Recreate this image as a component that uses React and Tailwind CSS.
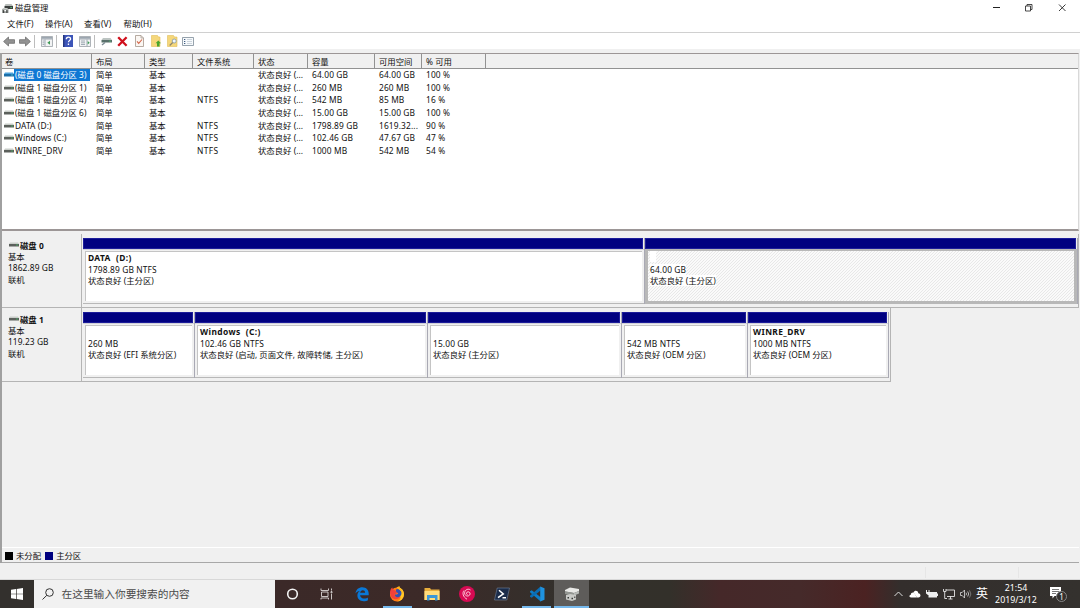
import clsx from 'clsx'

const COLUMNS = [
  { label: '卷', cell: 'w-[90px] pl-[3px]' },
  { label: '布局', cell: 'w-[53px] pl-1' },
  { label: '类型', cell: 'w-[48px] pl-1' },
  { label: '文件系统', cell: 'w-[61px] pl-1' },
  { label: '状态', cell: 'w-[54px] pl-1' },
  { label: '容量', cell: 'w-[67px] pl-1' },
  { label: '可用空间', cell: 'w-[47px] pl-1' },
  { label: '% 可用', cell: 'w-[64px] pl-1' },
]

const VOLUMES = [
  ['(磁盘 0 磁盘分区 3)', '', '64.00 GB', '64.00 GB', '100 %'],
  ['(磁盘 1 磁盘分区 1)', '', '260 MB', '260 MB', '100 %'],
  ['(磁盘 1 磁盘分区 4)', 'NTFS', '542 MB', '85 MB', '16 %'],
  ['(磁盘 1 磁盘分区 6)', '', '15.00 GB', '15.00 GB', '100 %'],
  ['DATA (D:)', 'NTFS', '1798.89 GB', '1619.32...', '90 %'],
  ['Windows (C:)', 'NTFS', '102.46 GB', '47.67 GB', '47 %'],
  ['WINRE_DRV', 'NTFS', '1000 MB', '542 MB', '54 %'],
]

const DISKS = [
  {
    name: '磁盘 0',
    size: '1862.89 GB',
    width: 'w-[997px]',
    parts: [
      { name: 'DATA  (D:)', size: '1798.89 GB NTFS', status: '状态良好 (主分区)', width: 'w-[562px]' },
      { name: '', size: '64.00 GB', status: '状态良好 (主分区)', width: 'w-[433px]', selected: true },
    ],
  },
  {
    name: '磁盘 1',
    size: '119.23 GB',
    width: 'w-[809px]',
    parts: [
      { name: '', size: '260 MB', status: '状态良好 (EFI 系统分区)', width: 'w-[112px]' },
      { name: 'Windows  (C:)', size: '102.46 GB NTFS', status: '状态良好 (启动, 页面文件, 故障转储, 主分区)', width: 'w-[233px]' },
      { name: '', size: '15.00 GB', status: '状态良好 (主分区)', width: 'w-[194px]' },
      { name: '', size: '542 MB NTFS', status: '状态良好 (OEM 分区)', width: 'w-[126px]' },
      { name: 'WINRE_DRV', size: '1000 MB NTFS', status: '状态良好 (OEM 分区)', width: 'w-[141px]' },
    ],
  },
]

function DriveIcon({ selected = false }) {
  return (
    <svg className="mb-px h-[5px] w-[10px] shrink-0" viewBox="0 0 10 5">
      <path d="M1 .5h8L10 2H0z" fill={selected ? '#4fa3dd' : '#c9cdc9'} />
      <path d="M0 2h10v2.500H0z" fill={selected ? '#1d6fa8' : '#5c605c'} />
      <path d="M7 2.400h2v1H7z" fill={selected ? '#42b7c9' : '#4aa565'} />
    </svg>
  )
}

function AppIcon() {
  return (
    <svg className="h-[11px] w-[11px]" viewBox="0 0 11 11">
      <path d="M3.500 1h6L11 3H2.500z" fill="#b8bdba" />
      <path d="M2.500 3H11v3H2.500z" fill="#3c403e" />
      <path d="M8.300 4h1.700v1H8.300z" fill="#54b06c" />
      <path d="M0 6.200 1.200 5h4L6.500 6.200z" fill="#c9cdca" />
      <path d="M0 6.200h6.500V10H0z" fill="#9ba19e" />
      <path d="M1 7.200h1.200V10H1zM4.300 7.200h1.200V10H4.300z" fill="#444" />
      <path d="M2.400 7h1.600v1.200H2.400z" fill="#fff" />
    </svg>
  )
}

function TitleBar() {
  return (
    <header className="flex h-4 items-center bg-white pl-0.5">
      <AppIcon />
      <span className="ml-[2px]">磁盘管理</span>
      <div className="ml-auto flex">
        <svg className="h-4 w-[33px]" viewBox="0 0 33 16" fill="none" stroke="#222" strokeWidth="1">
          <path d="M13 7.500h7" />
        </svg>
        <svg className="h-4 w-[33px]" viewBox="0 0 33 16" fill="none" stroke="#333" strokeWidth="0.9">
          <path d="M12.500 6h5v5h-5zM14 6V4.500h5v5h-1.500" />
        </svg>
        <svg className="h-4 w-[34px]" viewBox="0 0 34 16" fill="none" stroke="#222" strokeWidth="0.9">
          <path d="m13 4.500 6.500 6.500M19.500 4.500 13 11" />
        </svg>
      </div>
    </header>
  )
}

function MenuBar() {
  return (
    <nav className="flex h-4 items-center bg-white pl-[7px] tracking-[0.1px]">
      <span className="w-[38px]">文件(F)</span>
      <span className="w-[39px]">操作(A)</span>
      <span className="w-[39.5px]">查看(V)</span>
      <span>帮助(H)</span>
    </nav>
  )
}

function PanelIcon({ right = false }) {
  return (
    <svg className="h-[11px] w-[12px]" viewBox="0 0 12 11">
      <path d="M.5.5h11v10H.5z" fill="#f2f3f4" stroke="#9aa1a7" strokeWidth=".8" />
      <path d="M1 1h10v1.800H1z" fill="#9ca6b0" />
      <path d="M1 3.300h10" stroke="#aab2ba" strokeWidth=".7" />
      {right ? (
        <path d="M8 3.500V10M2 5h4M2 6.800h4M2 8.500h4" stroke="#8d99a6" strokeWidth=".8" />
      ) : (
        <path d="M4 3.500V10M1.600 5h1.700M1.600 6.800h1.700M1.600 8.500h1.700" stroke="#8d99a6" strokeWidth=".8" />
      )}
      {right ? <path d="m8.700 5 2 1.700-2 1.700z" fill="#3f9a55" /> : <path d="M9 4.800v4L6.300 6.800z" fill="#3f9a55" />}
    </svg>
  )
}

function Divider({ className }) {
  return <span className={clsx('h-[13px] w-px bg-[#bdbdbd]', className)} />
}

function Toolbar() {
  return (
    <div className="flex h-[17px] items-center border-t border-[#d0d0d0] bg-white pl-[3px]">
      <svg className="h-[11px] w-[12px]" viewBox="0 0 12 11">
        <path d="M.6 5.500 5.500 1v2.700h6v3.600h-6V10z" fill="#929292" stroke="#6f6f6f" strokeWidth=".8" />
      </svg>
      <svg className="ml-1 h-[11px] w-[12px]" viewBox="0 0 12 11">
        <path d="M11.400 5.500 6.500 1v2.700h-6v3.600h6V10z" fill="#929292" stroke="#6f6f6f" strokeWidth=".8" />
      </svg>
      <Divider className="mx-[3px] mr-1.5" />
      <PanelIcon />
      <Divider className="mx-[3px] mr-1.5" />
      <svg className="h-[12px] w-[10px]" viewBox="0 0 9 12" preserveAspectRatio="none">
        <path d="M0 0h9v12H0z" fill="#3d55b8" />
        <path d="M0 0h1.300v12H0z" fill="#24377f" />
        <path d="M3 4.200c0-2.800 3.800-2.600 3.800-.3 0 1.500-1.900 1.500-1.900 3.400M4.900 8.600v1.400" fill="none" stroke="#fff" strokeWidth="1.200" />
      </svg>
      <span className="ml-1.5 flex">
        <PanelIcon right />
      </span>
      <Divider className="mx-[3px] mr-1.5" />
      <svg className="h-[9px] w-[11px]" viewBox="0 0 11 9">
        <path d="M2 1h7.500L11 3H.500z" fill="#bcc4c2" />
        <path d="M.500 3H11v2.500H.500z" fill="#59706b" />
        <path d="M8 3.700h2v.8H8z" fill="#57bf78" />
        <path d="m1 8 3-2.500" stroke="#7c8b94" strokeWidth="1.300" />
      </svg>
      <svg className="ml-[5px] h-[11px] w-[11px]" viewBox="0 0 11 11" fill="none" stroke="#d0101c" strokeWidth="2.300">
        <path d="m1.200 1.200 8.400 8.600M9.600 1.200 1.200 9.800" />
      </svg>
      <svg className="ml-[7px] h-[12px] w-[9px]" viewBox="0 0 9 12">
        <path d="M.5.5h5.500l2.500 2.500v8.500h-8z" fill="#fbf7f3" stroke="#a5978c" strokeWidth=".8" />
        <path d="M6 .5V3h2.500" fill="none" stroke="#a5978c" strokeWidth=".7" />
        <path d="m2 6.300 1.700 2L7 4.500" fill="none" stroke="#d5674b" strokeWidth="1.100" />
      </svg>
      <svg className="ml-[7px] h-[12px] w-[11px]" viewBox="0 0 11 12">
        <path d="M.5.5h6l1 1.500h1.500v9.500H.5z" fill="#f5d77b" stroke="#e0bd59" strokeWidth=".6" />
        <path d="M7.300 5.500 10 8.300H8.500V11.500H6V8.300H4.600z" fill="#48a52c" />
      </svg>
      <svg className="ml-[5px] h-[12px] w-[11px]" viewBox="0 0 11 12">
        <path d="M.5.5h6l1 1.500H10v9.500H.5z" fill="#f5d77b" stroke="#e0bd59" strokeWidth=".6" />
        <circle cx="7.200" cy="6" r="2" fill="#eef6fc" stroke="#8297a8" strokeWidth=".8" />
        <path d="m5.700 7.500-3 3" stroke="#8d8571" strokeWidth="1.200" />
      </svg>
      <svg className="ml-[4px] h-[9px] w-[12px]" viewBox="0 0 12 9">
        <path d="M.5.5h11v8H.5z" fill="#f7fafc" stroke="#7d8b98" strokeWidth=".8" />
        <path d="M2 2.500h1.300M2 4.500h1.300M2 6.500h1.300" stroke="#3d5a80" strokeWidth="1" />
        <path d="M5 2.500h5M5 4.500h5M5 6.500h5" stroke="#c0cad3" strokeWidth=".8" />
      </svg>
    </div>
  )
}

function VolumeList() {
  return (
    <section className="mr-px h-[178px] border-b-2 border-r border-t-[1.500px] border-[#9c9696] border-r-[#d8d8d8] bg-white">
      <div className="flex h-[15px] border-b border-[#929292] bg-[#f0f0f0]">
        {COLUMNS.map((col) => (
          <div key={col.label} className={clsx('flex items-center border-r border-[#929292] pt-px', col.cell)}>
            {col.label}
          </div>
        ))}
      </div>
      {VOLUMES.map(([name, fs, size, free, pct], i) => (
        <div key={name} className="flex h-[12.600px] items-center leading-[12px] tracking-[0.13px]">
          <div className="flex w-[94px] items-center pl-[2px]">
            <DriveIcon selected={i === 0} />
            <span
              className={clsx(
                'h-[12px] pl-px',
                i < 4 ? 'tracking-normal' : 'tracking-[0.1px]',
                i === 0 && 'w-[76px] bg-[#0e78d4] text-white'
              )}
            >
              {name}
            </span>
          </div>
          <div className="w-[53px] tracking-normal">简单</div>
          <div className="w-[48px] tracking-normal">基本</div>
          <div className="w-[61px] tracking-[0.4px]">{fs}</div>
          <div className="w-[54px] tracking-normal">状态良好 (...</div>
          <div className="w-[67px]">{size}</div>
          <div className="w-[47px]">{free}</div>
          <div>{pct}</div>
        </div>
      ))}
    </section>
  )
}

function Partition({ part }) {
  return (
    <div className={clsx('flex h-[66px] flex-col border-r border-[#a9a9b4]', part.width)}>
      <div className="mr-px h-[11px] border border-[#1c1c9a] bg-[#000080]" />
      <div
        className={clsx(
          'flex-1 whitespace-pre leading-[11.400px]',
          part.selected
            ? 'border-[3px] border-t-2 border-[#b8b8b8] bg-[repeating-linear-gradient(135deg,#fafafa_0_0.8px,#e8e8e8_0.8px_1.500px,#f8f8f8_1.500px_2.121px)] pl-[2px]'
            : 'border-b border-t border-[#b8b8b8] border-t-[#d0d0d8] bg-[#f0f0f0] px-[2px] pb-[2px] pt-px'
        )}
      >
        <div className={clsx('h-full', !part.selected && 'border-l border-t border-[#c4c4c4] bg-white pl-[2px]')}>
          <div className={clsx('font-bold tracking-[0.4px]', part.selected ? 'h-[13px]' : 'h-[12px]')}>
            {part.name || <span className="inline-block h-[11px] w-[6px] bg-white" />}
          </div>
          <div>
            <span className="bg-white tracking-[0.13px]">{part.size}</span>
          </div>
          <div>
            <span className="bg-white">{part.status}</span>
          </div>
        </div>
      </div>
    </div>
  )
}

function DiskRow({ disk }) {
  return (
    <div className="flex h-[74px]">
      <div className="w-[80px] border-b border-r border-[#b4b4b4] pl-[6px] pt-[5.600px] leading-[11.400px]">
        <div className="flex items-center pl-px font-bold">
          <DriveIcon />
          <span className="ml-px">{disk.name}</span>
        </div>
        <div>基本</div>
        <div className="tracking-[0.080px]">{disk.size}</div>
        <div>联机</div>
      </div>
      <div className={clsx('flex border-b border-r border-[#b4b4b4] pl-px pt-[4px]', disk.width)}>
        {disk.parts.map((part) => (
          <Partition key={part.size} part={part} />
        ))}
      </div>
    </div>
  )
}

const TASKS = [
  {
    id: 'cortana',
    icon: <circle cx="8.500" cy="8" r="4.800" fill="none" stroke="#f4f4f4" strokeWidth="1.600" />,
  },
  {
    id: 'taskview',
    icon: (
      <path
        d="M2 2.500V4.500H9.500V2.500M2.500 6h6.500v4.500H2.500zM2 13.500V12H9.500v1.500M12.500 2.500V4.500M12.500 8v5.500M12 5.500h1v1.500h-1z"
        fill="none"
        stroke="#d9d5d4"
        strokeWidth=".9"
      />
    ),
  },
  {
    id: 'edge',
    icon: (
      <path
        d="M1.500 7.500C2 3.500 4.800 1.300 8.300 1.300c4.200 0 6.400 3 6.400 6.200v1.700H6.100c.2 2.500 2.300 3.300 4.200 3.300 1.600 0 2.700-.4 3.600-1v2.700c-1 .6-2.500 1-4.300 1-3.800 0-6.200-2.300-6.200-5.600 0-2 .9-3.600 2.500-4.500C3.800 5.400 2.500 6.100 1.500 7.500zM6.200 6.700h4.900c0-1.700-.9-2.500-2.300-2.500-1.500 0-2.400 1.100-2.600 2.500z"
        fill="#0a78d7"
      />
    ),
  },
  {
    id: 'firefox',
    open: true,
    icon: (
      <>
        <circle cx="8" cy="8.500" r="7" fill="#ff7b16" />
        <path d="M9 1c4 1 6.200 4 6 7.800A7 7 0 0 1 8 15.500c4-1.500 4-4.500 3-6.500z" fill="#ffc928" />
        <path d="M1 7C1 4 2 2.200 3.300 1.500 3.400 3 4.500 4 6 4.300L8.500 7l-3 1.500C6 11 8.500 12 11 10.500 9.500 14 4 14 2 10.500z" fill="#f0413a" />
        <path d="M7 3.500c2.800-1.600 5.500.5 5.500 3.500 0 3-2.500 4.800-5 4-1.500-.5-2-2-1.300-2.500 2 .3 3-.7 3-1.500-1.200 0-2.700-1.500-2.200-3.500z" fill="#3150b4" />
        <path d="M7.500 1.500C8.500.7 9.500.5 10.500 0 10.500 3 14 4 13.800 8c-1-3-3.800-4.500-6.300-6.500z" fill="#ffb51c" />
      </>
    ),
  },
  {
    id: 'explorer',
    icon: (
      <>
        <path d="M.5 2h5.500l1 1.500h8.500V14H.5z" fill="#e9ae3c" />
        <path d="M.5 5h15v9H.5z" fill="#ffdc7c" />
        <path d="M3 9h10.500v5.500H11V12H5.500v2.500H3z" fill="#3b97d8" />
      </>
    ),
  },
  {
    id: 'debian',
    icon: (
      <>
        <circle cx="8" cy="8" r="8" fill="#d70a53" />
        <path
          d="M8.600 8.700C7 8.400 7 6 9 5.800c2-.1 2.700 2 1.600 3.300-1.800 2-5.300.6-5-2.300C5.900 3.500 9.500 2.300 11.500 4M5 4.500C3 7 4 11 8 13.200"
          fill="none"
          stroke="#ffdce8"
          strokeWidth=".9"
        />
      </>
    ),
  },
  {
    id: 'powershell',
    icon: (
      <>
        <path d="M3.200 2H15.500l-2.700 12H.5z" fill="#1b2c4a" stroke="#8195b0" strokeWidth=".5" />
        <path d="m5 4.200 4.300 3.700-5.300 3.700M8.500 11.800h3.500" fill="none" stroke="#fff" strokeWidth="1.500" />
      </>
    ),
  },
  {
    id: 'vscode',
    open: true,
    icon: (
      <>
        <path d="M11.200 4.300v7.400L6 8z" fill="#3a2d2a" />
        <path d="M1 5.200 2.700 4.200 11.700 11.200v4.300L1 6.300z" fill="#0e7cc6" />
        <path d="M11.500.5v4L2.700 11.700 1 10.700V9.700z" fill="#0a6db4" />
        <path d="m11.200.5 4.300 1.800v11.500l-4.300 1.700z" fill="#1f93e0" />
      </>
    ),
  },
  {
    id: 'diskmgmt',
    open: true,
    active: true,
    icon: (
      <>
        <path d="m1 4 5-2.500 9 1.500v2l-5 2-9-1.500z" fill="#e9e9e7" />
        <path d="m1 5.300 9 1.700v2.500L1 8z" fill="#929591" />
        <path d="m10 7 5-2v2.500l-5 2z" fill="#b7bab7" />
        <path d="m2 9 4-1 6 1v4.500l-4 1.500-6-1.500z" fill="#c9cac7" />
        <path d="M3.500 11h1.500v1.500H3.500zM7.500 11.700H9v1.500H7.500zM10.300 10.500h1V12h-1z" fill="#363836" />
      </>
    ),
  },
]

function Tray() {
  return (
    <div className="ml-auto flex items-center text-white">
      <svg className="h-3 w-[9px]" viewBox="0 0 9 12" fill="none" stroke="#ddd" strokeWidth="1">
        <path d="m.5 8 4-4 4 4" />
      </svg>
      <svg className="ml-[6px] h-3 w-[12px]" viewBox="0 0 12 12" fill="#fff">
        <path d="M2 9.500C0 9.500 0 7 1.800 6.800 1.800 4.800 4 4 5.200 5L8 9.500z" />
        <path d="M4.500 4.500C5.500 2 9 2.500 9.300 5.200c2.700.2 3 4.300.2 4.300H8z" />
      </svg>
      <svg className="ml-[5px] h-3 w-[12px]" viewBox="0 0 12 12" fill="#eee">
        <path d="M2.500 4H11v5.500H2.500zM11 5.500h1v2.500h-1zM0 2h1v2H0zM2.500 2h1v2h-1zM0 4h4v1.500L2 7 0 5.500z" />
      </svg>
      <svg className="ml-[5px] h-3 w-[12px]" viewBox="0 0 12 12" fill="none" stroke="#e5e5e5" strokeWidth=".9">
        <path d="M3 2h8.500v6.500H4M5.500 11h4M7.500 8.500V11M.5 1v2.500h2.500V1M1.700 3.500v7H4" />
      </svg>
      <svg className="ml-[5px] h-3 w-[12px]" viewBox="0 0 12 12" fill="none" stroke="#ddd" strokeWidth=".8">
        <path d="M.5 4.500h1.700L4.500 2v8L2.200 7.500H.5zM6 4.700q1 1.300 0 2.600M7.700 3.500q2 2.500 0 5" />
        <path d="M9.500 2.300q2.700 3.700 0 7.400" stroke="#888" />
      </svg>
      <span className="ml-[4px] text-[12px] leading-[12px]">英</span>
      <div className="ml-[6px] w-[44px] text-center text-[8.800px] leading-[12.500px]">
        <div>21:54</div>
        <div>2019/3/12</div>
      </div>
      <div className="relative ml-[11px] mr-[11px] h-[16px] w-[20px]">
        <svg className="h-[16px] w-[14px]" viewBox="0 0 14 16">
          <path d="M1 1h11v9H5.500L3.500 12.500V10H1z" fill="#fff" />
          <path d="M3 3.500h7M3 5.500h7M3 7.500h4" stroke="#555" strokeWidth=".8" />
        </svg>
        <span className="absolute left-[7px] top-[5px] flex h-[11px] w-[11px] items-center justify-center rounded-full border border-[#888] bg-[#33302e] text-[8px] leading-none">
          1
        </span>
      </div>
    </div>
  )
}

function Taskbar() {
  return (
    <footer className="flex h-[28px] bg-[linear-gradient(90deg,#33302d_0,#33302d_30px,#3b2928_275px,#3c2a28_430px,#33302c_560px,#33302a_670px,#452829_720px,#452a2a_800px,#4b2222_865px,#332e2c_900px,#34312e_1080px)]">
      <div className="flex w-[34px] items-center justify-center">
        <svg className="h-[12px] w-[12px]" viewBox="0 0 12 12" fill="#fff">
          <path d="M0 1.700 5 1v4.700H0zM5.700.9 12 0v5.700H5.700zM0 6.300h5V11l-5-.7zM5.700 6.300H12V12l-6.300-.9z" />
        </svg>
      </div>
      <div className="flex w-[241px] items-center bg-[#f1f1f1] pl-[8px] text-[10.700px] text-[#4a4a4a]">
        <svg className="mr-[7.500px] h-[12px] w-[12px]" viewBox="0 0 12 12" fill="none" stroke="#333" strokeWidth="1">
          <circle cx="7.500" cy="4.500" r="3.800" />
          <path d="M4.800 7.300.5 11.500" />
        </svg>
        在这里输入你要搜索的内容
      </div>
      {TASKS.map((task) => (
        <div
          key={task.id}
          className={clsx('relative flex w-[34.900px] items-center justify-center', task.active && 'bg-[#5e5c5a]')}
        >
          <svg className="h-[16px] w-[16px]" viewBox="0 0 16 16">
            {task.icon}
          </svg>
          {task.open && (
            <span className={clsx('absolute bottom-0 h-[2px] bg-[#76b9ed]', task.active ? 'w-full' : 'w-[29px]')} />
          )}
        </div>
      ))}
      <Tray />
    </footer>
  )
}

export default function App() {
  return (
    <div className="flex h-[608px] w-[1080px] flex-col overflow-hidden whitespace-nowrap bg-[#f0f0f0] font-['Noto_Sans','Noto_Sans_CJK_SC',sans-serif] text-[8.400px] leading-[12px] text-[#111]">
      <TitleBar />
      <MenuBar />
      <Toolbar />
      <main className="mt-[4px] flex h-[510px] flex-col border-l-2 border-[#a0a0a0]">
        <VolumeList />
        <section className="mr-px flex h-[332px] flex-col border-b border-[#a8a8a8] pt-[3px]">
          {DISKS.map((disk) => (
            <DiskRow key={disk.name} disk={disk} />
          ))}
          <div className="mt-auto flex h-[15px] items-center border-t border-white pl-[3px] pt-px">
            <span className="h-[8px] w-[8px] bg-black" />
            <span className="ml-[3px]">未分配</span>
            <span className="ml-[4px] h-[8px] w-[8px] bg-[#000080]" />
            <span className="ml-[3px]">主分区</span>
          </div>
        </section>
      </main>
      <div className="mt-[4px] flex h-[11px] justify-end gap-[92px] pr-[61px]">
        <span className="w-px bg-[#e6e6e6]" />
        <span className="w-px bg-[#e6e6e6]" />
      </div>
      <div className="mt-auto h-px bg-[#d8d8d8]" />
      <Taskbar />
    </div>
  )
}
